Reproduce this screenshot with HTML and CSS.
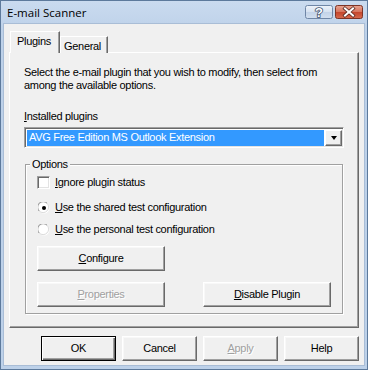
FILE: index.html
```html
<!DOCTYPE html>
<html>
<head>
<meta charset="utf-8">
<link rel="stylesheet" href="styles.css">
</head>
<body>
<div class="window">
  <div class="titlebar">
    <span class="title">E-mail Scanner</span>
    <div class="caption-btns">
      <svg class="cap-btn" width="28" height="14" viewBox="0 0 28 14">
        <defs>
          <linearGradient id="gh" x1="0" y1="0" x2="0" y2="1">
            <stop offset="0" stop-color="#eef3fa"/>
            <stop offset="0.5" stop-color="#d5e1f0"/>
            <stop offset="0.51" stop-color="#c3d3e8"/>
            <stop offset="1" stop-color="#d2dfef"/>
          </linearGradient>
        </defs>
        <rect x="0.5" y="0.5" width="27" height="13" rx="2" fill="url(#gh)" stroke="#6f86a6"/>
        <text x="14" y="12" text-anchor="middle" class="help-glyph">?</text>
      </svg>
      <svg class="cap-btn" width="28" height="14" viewBox="0 0 28 14">
        <defs>
          <linearGradient id="gc" x1="0" y1="0" x2="0" y2="1">
            <stop offset="0" stop-color="#e8a593"/>
            <stop offset="0.5" stop-color="#d6735c"/>
            <stop offset="0.51" stop-color="#c4452c"/>
            <stop offset="1" stop-color="#d66a4e"/>
          </linearGradient>
        </defs>
        <rect x="0.5" y="0.5" width="27" height="13" rx="2" fill="url(#gc)" stroke="#7d3426"/>
        <path d="M10 3.5 L18 10.5 M18 3.5 L10 10.5" stroke="#5a2a22" stroke-width="3.6" stroke-linecap="square"/>
        <path d="M10 3.5 L18 10.5 M18 3.5 L10 10.5" stroke="#ffffff" stroke-width="2" stroke-linecap="square"/>
      </svg>
    </div>
  </div>
  <div class="client">
    <div class="tabs">
      <div class="tab active">Plugins</div>
      <div class="tab">General</div>
    </div>
    <div class="page">
      <p class="desc">Select the e-mail plugin that you wish to modify, then select from<br>among the available options.</p>
      <div class="label"><u>I</u>nstalled plugins</div>
      <div class="combo">
        <div class="combo-sel">AVG Free Edition MS Outlook Extension</div>
        <div class="combo-btn"><span class="arrow"></span></div>
      </div>
      <fieldset class="group">
        <legend>Options</legend>
        <div class="opt-row check-row"><span class="checkbox"></span><span><u>I</u>gnore plugin status</span></div>
        <div class="opt-row radio-row first">
          <svg class="radio" width="12" height="12" viewBox="0 0 12 12">
            <circle cx="6" cy="6" r="5.5" fill="#ffffff"/>
            <path d="M1.2 9 A5.2 5.2 0 0 1 9 1.2" fill="none" stroke="#8c8c8c" stroke-width="1"/>
            <path d="M9 1.2 A5.2 5.2 0 0 1 1.2 9" fill="none" stroke="#dcdcdc" stroke-width="1"/>
            <circle cx="6" cy="6" r="2" fill="#000000"/>
          </svg>
          <span><u>U</u>se the shared test configuration</span>
        </div>
        <div class="opt-row radio-row">
          <svg class="radio" width="12" height="12" viewBox="0 0 12 12">
            <circle cx="6" cy="6" r="5.5" fill="#ffffff"/>
            <path d="M1.2 9 A5.2 5.2 0 0 1 9 1.2" fill="none" stroke="#8c8c8c" stroke-width="1"/>
            <path d="M9 1.2 A5.2 5.2 0 0 1 1.2 9" fill="none" stroke="#dcdcdc" stroke-width="1"/>
          </svg>
          <span><u>U</u>se the personal test configuration</span>
        </div>
        <div class="btn-row single">
          <div class="btn wide"><u>C</u>onfigure</div>
        </div>
        <div class="btn-row split">
          <div class="btn wide disabled"><u>P</u>roperties</div>
          <div class="btn wide"><u>D</u>isable Plugin</div>
        </div>
      </fieldset>
    </div>
    <div class="footer">
      <div class="btn default">OK</div>
      <div class="btn">Cancel</div>
      <div class="btn disabled"><u>A</u>pply</div>
      <div class="btn">Help</div>
    </div>
  </div>
</div>
</body>
</html>
```

FILE: styles.css
```css
html, body {
  margin: 0;
  padding: 0;
  background: #ffffff;
}

body {
  width: 368px;
  height: 370px;
  overflow: hidden;
  font-family: "Liberation Sans", Arial, sans-serif;
  font-size: 11px;
  line-height: 13px;
  letter-spacing: -0.3px;
  color: #000000;
}

.window {
  width: 368px;
  height: 370px;
  box-sizing: border-box;
  border: 1px solid #5d7a9c;
  background: linear-gradient(#cadbef, #bdd1e9 30px, #bdd1e9);
  padding: 0 3px 3px 3px;
  display: flex;
  flex-direction: column;
}

.titlebar {
  height: 22px;
  display: flex;
  align-items: flex-start;
  justify-content: space-between;
  flex-shrink: 0;
}

.title {
  font-family: "Open Sans", "Noto Sans", sans-serif;
  font-size: 11.5px;
  letter-spacing: 0;
  line-height: 14px;
  padding: 5px 0 0 3px;
  color: #000000;
}

.caption-btns {
  display: flex;
  gap: 2px;
  padding-top: 4px;
  margin-right: 1px;
}

.cap-btn {
  display: block;
}

.help-glyph {
  font-family: "Liberation Sans", Arial, sans-serif;
  font-size: 13px;
  font-weight: bold;
  fill: #ffffff;
  stroke: #3f526e;
  stroke-width: 1.6px;
  paint-order: stroke;
  letter-spacing: 0;
}

.client {
  flex: 1;
  background: #f0f0f0;
  padding: 7px 5px 4px 5px;
  display: flex;
  flex-direction: column;
  border: 1px solid #a9bdd6;
  margin: 0 -1px 0 -1px;
}

.tabs {
  display: flex;
  align-items: flex-end;
  padding-left: 1px;
  margin-bottom: -1px;
  position: relative;
  z-index: 1;
}

.tab {
  background: #f0f0f0;
  border: 1px solid #ffffff;
  border-bottom: none;
  border-right-color: #696969;
  box-shadow: inset -1px 0 0 #a0a0a0;
  padding: 3px 6px 0 3px;
}

.tab.active {
  padding: 3px 8px 5px 6px;
}

.page {
  flex: 1;
  border: 1px solid;
  border-color: #ffffff #696969 #696969 #ffffff;
  box-shadow: inset -1px -1px 0 #a0a0a0;
  padding: 13px 14px 0 14px;
}

.desc {
  margin: 0;
}

.label {
  margin-top: 18px;
}

.combo {
  margin-top: 4px;
  width: 320px;
  height: 21px;
  box-sizing: border-box;
  border: 1px solid;
  border-color: #a0a0a0 #ffffff #ffffff #a0a0a0;
  box-shadow: inset 1px 1px 0 #696969, inset -1px -1px 0 #e3e3e3;
  background: #ffffff;
  display: flex;
  padding: 2px 1px 1px 2px;
  gap: 1px;
}

.combo-sel {
  flex: 1;
  background: #3399ff;
  color: #ffffff;
  padding: 1px 0 0 2px;
  white-space: nowrap;
}

.combo-btn {
  width: 17px;
  box-sizing: border-box;
  background: #f0f0f0;
  border: 1px solid;
  border-color: #ffffff #696969 #696969 #ffffff;
  box-shadow: inset -1px -1px 0 #a0a0a0;
  display: flex;
  align-items: center;
  justify-content: center;
}

.arrow {
  width: 0;
  height: 0;
  border-left: 3.5px solid transparent;
  border-right: 3.5px solid transparent;
  border-top: 4px solid #000000;
}

.group {
  margin: 10px 0 0 1px;
  width: 318px;
  box-sizing: border-box;
  border: 1px solid #a0a0a0;
  box-shadow: inset 1px 1px 0 #ffffff, 1px 1px 0 #ffffff;
  padding: 5px 11px 6px 11px;
  min-width: 0;
}

.group legend {
  padding: 0 2px;
  margin-left: -7px;
  background: #f0f0f0;
  line-height: 13px;
}

.opt-row {
  display: flex;
  align-items: center;
  height: 13px;
  gap: 5px;
}

.radio-row {
  margin-top: 9px;
}

.radio-row.first {
  margin-top: 12px;
}

.radio {
  display: block;
  margin-left: 1px;
}

.checkbox {
  width: 13px;
  height: 13px;
  box-sizing: border-box;
  border: 1px solid;
  border-color: #a0a0a0 #ffffff #ffffff #a0a0a0;
  box-shadow: inset 1px 1px 0 #696969, inset -1px -1px 0 #e3e3e3;
  background: #ffffff;
}

.btn-row {
  display: flex;
}

.btn-row.single {
  margin-top: 10px;
}

.btn-row.split {
  margin-top: 11px;
  justify-content: space-between;
}

.btn {
  width: 75px;
  height: 25px;
  box-sizing: border-box;
  background: #f0f0f0;
  border: 1px solid;
  border-color: #ffffff #696969 #696969 #ffffff;
  box-shadow: inset -1px -1px 0 #a0a0a0, inset 1px 1px 0 #f8f8f8;
  display: flex;
  align-items: center;
  justify-content: center;
  padding-bottom: 1px;
}

.btn.wide {
  width: 128px;
}

.btn.disabled {
  color: #a0a0a0;
  text-shadow: 1px 1px 0 #ffffff;
}

.btn.default {
  border: 1px solid #000000;
  box-shadow: inset 1px 1px 0 #ffffff, inset -1px -1px 0 #696969, inset -2px -2px 0 #a0a0a0;
}

.footer {
  display: flex;
  justify-content: flex-end;
  gap: 6px;
  margin-top: 8px;
}
```
